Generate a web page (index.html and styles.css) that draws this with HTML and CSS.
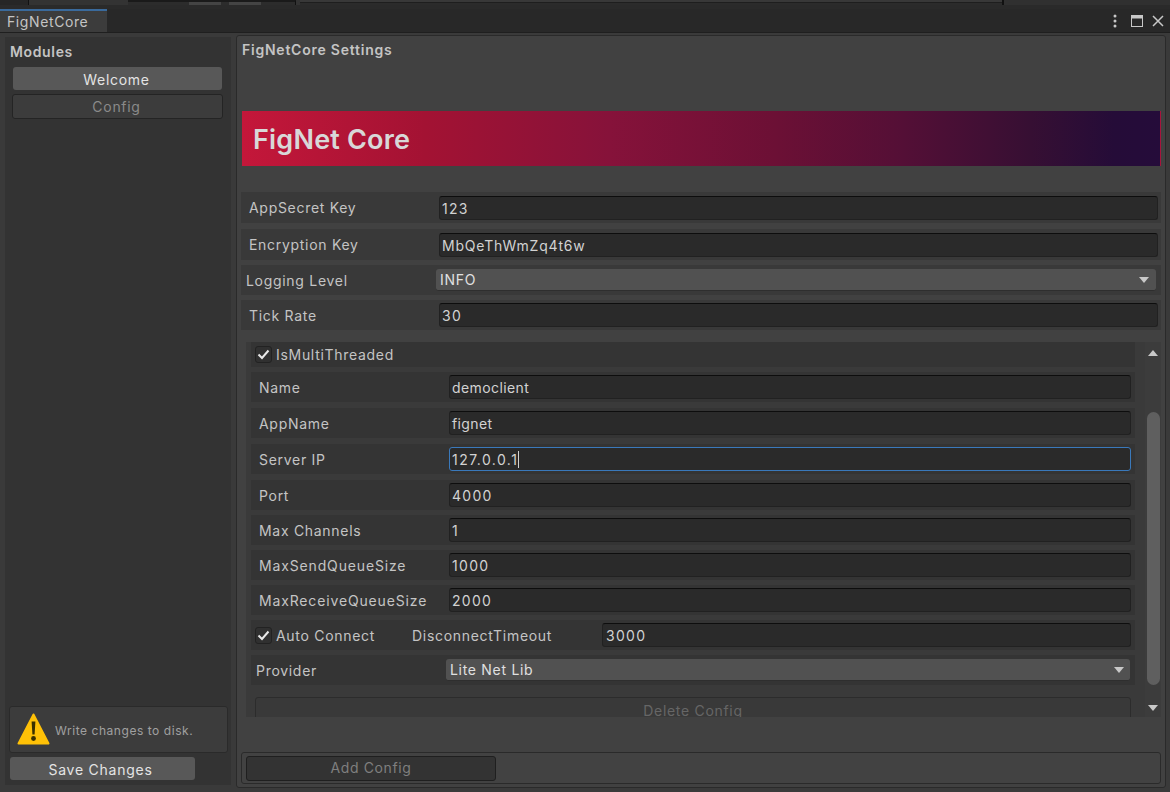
FILE: index.html
```html
<!DOCTYPE html>
<html lang="en">

<head>
    <meta charset="UTF-8">
    <title>FigNetCore</title>
    <link rel="stylesheet" href="styles.css">
</head>

<body>
    <div class="window">
        <!-- editor chrome behind the window -->
        <div class="strip">
            <div class="seg seg-a"></div>
            <div class="seg seg-b"></div>
            <div class="seg seg-c">
                <span class="seg-box"></span>
                <span class="seg-box"></span>
            </div>
            <div class="seg seg-d"></div>
            <div class="seg seg-e"></div>
            <div class="seg seg-f"></div>
        </div>

        <div class="tabbar">
            <div class="tab">FigNetCore</div>
            <div class="tab-icons">
                <svg width="6" height="14" viewBox="0 0 6 14">
                    <circle cx="3" cy="2" r="1.5" fill="#c8c8c8" />
                    <circle cx="3" cy="7" r="1.5" fill="#c8c8c8" />
                    <circle cx="3" cy="12" r="1.5" fill="#c8c8c8" />
                </svg>
                <svg width="12" height="12" viewBox="0 0 12 12">
                    <rect x="0.5" y="0.5" width="11" height="11" fill="none" stroke="#c8c8c8" />
                    <rect x="0" y="0" width="12" height="3.5" fill="#c8c8c8" />
                </svg>
                <svg width="12" height="12" viewBox="0 0 12 12">
                    <path d="M1 1L11 11M11 1L1 11" fill="none" stroke="#c8c8c8" stroke-width="1.5" />
                </svg>
            </div>
        </div>

        <div class="main">
            <div class="side">
                <div class="side-title">Modules</div>
                <div class="side-btn side-btn-on">Welcome</div>
                <div class="side-btn side-btn-off">Config</div>
                <div class="side-space"></div>
                <div class="notice">
                    <svg class="notice-icon" width="33" height="33" viewBox="0 0 33 33">
                        <path d="M16.5 1.5L31.5 30.5H1.5Z" fill="#ffc107" stroke="#ffc107" stroke-width="2" stroke-linejoin="round" />
                        <path d="M14.6 8.5H18.4L17.6 21.5H15.4Z" fill="#3a3000" />
                        <circle cx="16.5" cy="25.5" r="2.4" fill="#3a3000" />
                    </svg>
                    <span class="notice-text">Write changes to disk.</span>
                </div>
                <div class="save-btn">Save Changes</div>
            </div>

            <div class="panel">
                <div class="panel-title">FigNetCore Settings</div>
                <div class="banner">FigNet Core</div>

                <div class="top-rows">
                    <div class="row row-tall">
                        <div class="label">AppSecret Key</div>
                        <div class="field num">123</div>
                    </div>
                    <div class="row row-tall">
                        <div class="label">Encryption Key</div>
                        <div class="field">MbQeThWmZq4t6w</div>
                    </div>
                    <div class="row">
                        <div class="label label-drop">Logging Level</div>
                        <div class="drop">INFO<span class="arrow-down"></span></div>
                    </div>
                    <div class="row">
                        <div class="label">Tick Rate</div>
                        <div class="field num">30</div>
                    </div>
                </div>

                <div class="scroll">
                    <div class="scroll-inner">
                        <div class="row check-row">
                            <span class="check">
                                <svg width="13" height="11" viewBox="0 0 13 11">
                                    <path d="M1.5 5.5L5 9L11.5 1.5" fill="none" stroke="#e8e8e8" stroke-width="2" />
                                </svg>
                            </span>
                            <span class="check-label">IsMultiThreaded</span>
                        </div>
                        <div class="row inner wide-gap">
                            <div class="label">Name</div>
                            <div class="field tight">democlient</div>
                        </div>
                        <div class="row inner wide-gap">
                            <div class="label">AppName</div>
                            <div class="field tight">fignet</div>
                        </div>
                        <div class="row inner wide-gap">
                            <div class="label">Server IP</div>
                            <div class="field num field-focus">127.0.0.1<span class="caret"></span></div>
                        </div>
                        <div class="row inner">
                            <div class="label">Port</div>
                            <div class="field num">4000</div>
                        </div>
                        <div class="row inner">
                            <div class="label">Max Channels</div>
                            <div class="field num">1</div>
                        </div>
                        <div class="row inner">
                            <div class="label label-wide">MaxSendQueueSize</div>
                            <div class="field num">1000</div>
                        </div>
                        <div class="row inner">
                            <div class="label label-wide">MaxReceiveQueueSize</div>
                            <div class="field num">2000</div>
                        </div>
                        <div class="row check-row auto-row">
                            <span class="check">
                                <svg width="13" height="11" viewBox="0 0 13 11">
                                    <path d="M1.5 5.5L5 9L11.5 1.5" fill="none" stroke="#e8e8e8" stroke-width="2" />
                                </svg>
                            </span>
                            <span class="check-label auto-label">Auto Connect</span>
                            <span class="timeout-label">DisconnectTimeout</span>
                            <div class="field num">3000</div>
                        </div>
                        <div class="row inner provider-row">
                            <div class="label">Provider</div>
                            <div class="drop">Lite Net Lib<span class="arrow-down"></span></div>
                        </div>
                        <div class="delete-btn">Delete Config</div>
                    </div>
                    <div class="scrollbar">
                        <span class="arrow-up"></span>
                        <div class="thumb"></div>
                        <span class="arrow-down"></span>
                    </div>
                </div>

                <div class="panel-space"></div>
                <div class="footer">
                    <div class="add-btn">Add Config</div>
                </div>
            </div>
        </div>
    </div>
</body>

</html>
```

FILE: styles.css
```css
* {
    padding: 0;
    margin: 0;
    box-sizing: border-box;
}

html,
body {
    width: 1170px;
    height: 792px;
    overflow: hidden;
    background: #3a3a3a;
}

body {
    font-family: Inter, "Liberation Sans", sans-serif;
    font-size: 14px;
    letter-spacing: 0.7px;
    color: #c4c4c4;
}

.window {
    height: 792px;
    display: flex;
    flex-direction: column;
}

/* top strip */
.strip {
    height: 9px;
    display: flex;
    background: #2a2a2a;
}

.seg {
    height: 5px;
}

.seg-a {
    width: 29px;
    background: #262626;
    border-right: 1px solid #111;
}

.seg-b {
    width: 99px;
    background: #333;
}

.seg-c {
    width: 168px;
    background: #2c2c2c;
    border-top: 2px solid #1a1a1a;
    border-right: 1px solid #111;
    display: flex;
    gap: 8px;
    padding-left: 61px;
}

.seg-box {
    width: 32px;
    height: 3px;
    background: #444;
}

.seg-d {
    width: 4px;
    background: #333;
}

.seg-e {
    width: 704px;
    background: linear-gradient(#383838 2px, #1e1e1e 2px, #1e1e1e 3px, #2b2b2b 3px);
    border-right: 2px solid #111;
}

.seg-f {
    flex: 1;
    background: #303030;
}

/* tabs */
.tabbar {
    height: 24px;
    display: flex;
    justify-content: space-between;
    background: #282828;
    border-bottom: 1px solid #1f1f1f;
}

.tab {
    width: 107px;
    height: 23px;
    padding-left: 7px;
    line-height: 22px;
    background: #3c3c3c;
    border-top: 2px solid #3a6a9c;
    letter-spacing: 0.6px;
}

.tab-icons {
    display: flex;
    align-items: center;
    gap: 9px;
    padding-right: 6px;
}

.tab-icons svg:nth-child(2) {
    margin-left: 4px;
}

/* layout */
.main {
    flex: 1;
    display: flex;
    padding: 2px 4px 4px 5px;
    gap: 5px;
}

.side {
    width: 226px;
    margin-top: 2px;
    margin-bottom: 3px;
    background: #333;
    display: flex;
    flex-direction: column;
    padding-left: 4px;
}

.side-title {
    height: 30px;
    line-height: 30px;
    padding-left: 1px;
    font-weight: 600;
    letter-spacing: 0.65px;
}

.side-btn {
    height: 23px;
    line-height: 25px;
    text-align: center;
    border-radius: 3px;
    margin-left: 4px;
    width: 209px;
    padding-right: 2px;
}

.side-btn-on {
    background: #585858;
    color: #e4e4e4;
}

.side-btn-off {
    height: 25px;
    width: 211px;
    margin-left: 3px;
    margin-top: 4px;
    line-height: 23px;
    background: #3c3c3c;
    border: 1px solid #242424;
    color: #8a8a8a;
}

.side-space {
    flex: 1;
}

.notice {
    width: 219px;
    height: 47px;
    display: flex;
    align-items: center;
    gap: 5px;
    padding-left: 7px;
    background: #3c3c3c;
    border: 1px solid #2a2a2a;
    border-radius: 3px;
    font-size: 12px;
    letter-spacing: 0.55px;
    color: #a0a0a0;
}

.notice-text {
    padding-top: 2px;
}

.save-btn {
    width: 185px;
    height: 23px;
    margin: 4px 0 5px 1px;
    padding-right: 4px;
    line-height: 26px;
    text-align: center;
    background: #585858;
    border-radius: 3px;
    color: #e4e4e4;
    letter-spacing: 0.75px;
}

/* right panel */
.panel {
    width: 930px;
    background: #414141;
    border: 1px solid #2a2a2a;
    border-radius: 3px;
    padding: 0 4px 3px;
    display: flex;
    flex-direction: column;
}

.panel-title {
    height: 28px;
    line-height: 28px;
    padding-left: 1px;
    font-weight: 600;
    letter-spacing: 0.77px;
}

.banner {
    height: 55px;
    margin: 47px 0 26px 1px;
    padding-left: 11px;
    line-height: 58px;
    font-size: 27px;
    font-weight: 600;
    letter-spacing: 0.2px;
    color: #d8d8d8;
    background: linear-gradient(90deg, #c4173a 0%, #a31233 20%, #86123a 40%, #6c1035 58%, #540f36 72%, #360f33 86%, #250c38 95%, #250c3a 100%);
    border-right: 1px solid #a8143c;
}

/* rows */
.row {
    height: 30px;
    display: flex;
    align-items: center;
    background: #393939;
    margin-bottom: 5px;
}

.row-tall {
    height: 31px;
    margin-bottom: 6px;
}

.row-tall + .row {
    margin-bottom: 5px;
}

.label {
    width: 198px;
    padding-left: 8px;
    flex-shrink: 0;
}

.label-drop {
    width: 195px;
    padding-left: 5px;
}

.label-wide {
    letter-spacing: 0.85px;
}

.field {
    flex: 1;
    height: 24px;
    margin-right: 3px;
    padding-left: 2px;
    line-height: 24px;
    background: #2a2a2a;
    border: 1px solid #212121;
    border-top-color: #0d0d0d;
    border-radius: 3px;
    color: #d2d2d2;
    letter-spacing: 0.8px;
}

.num {
    letter-spacing: 1.3px;
}

.tight {
    letter-spacing: 0.4px;
}

.field-focus {
    border-color: #3a79bb;
    background: #2a2a2a;
    line-height: 23px;
    letter-spacing: 1.45px;
}

.caret {
    display: inline-block;
    width: 1px;
    height: 17px;
    margin-left: 0;
    background: #d2d2d2;
    vertical-align: -3px;
}

.drop {
    flex: 1;
    height: 22px;
    margin-right: 5px;
    padding-left: 4px;
    display: flex;
    align-items: center;
    justify-content: space-between;
    background: #515151;
    border-bottom: 1px solid #2e2e2e;
    border-radius: 3px;
    color: #e0e0e0;
}

.arrow-down {
    width: 0;
    height: 0;
    margin-right: 7px;
    border-left: 5px solid transparent;
    border-right: 5px solid transparent;
    border-top: 6px solid #c8c8c8;
}

.arrow-up {
    width: 0;
    height: 0;
    border-left: 5px solid transparent;
    border-right: 5px solid transparent;
    border-bottom: 6px solid #c8c8c8;
}

/* scroll area */
.scroll {
    height: 375px;
    margin-top: 7px;
    margin-left: 5px;
    display: flex;
    background: #3a3a3a;
    overflow: hidden;
}

.scroll-inner {
    width: 889px;
    padding-left: 5px;
}

.scroll .row {
    background: #343434;
}

.check-row {
    height: 25px;
    margin-bottom: 5px;
    padding-left: 4px;
}

.check {
    width: 17px;
    height: 17px;
    display: flex;
    align-items: center;
    justify-content: center;
    background: #303030;
    border: 1px solid #222;
    border-radius: 3px;
}

.check-label {
    margin-left: 4px;
}

.inner .label {
    width: 198px;
}

.wide-gap {
    margin-bottom: 6px;
}

.auto-row {
    height: 30px;
}

.auto-label {
    width: 136px;
}

.timeout-label {
    width: 190px;
}

.auto-row .field,
.inner .field {
    margin-right: 4px;
}

.auto-row .field {
    padding-left: 3px;
}

.provider-row .label {
    width: 195px;
    padding-left: 5px;
}

.provider-row .drop {
    margin-right: 5px;
}

.provider-row .arrow-down {
    margin-right: 6px;
}

.delete-btn {
    width: 876px;
    height: 28px;
    margin-top: 12px;
    margin-left: 4px;
    line-height: 25px;
    text-align: center;
    background: #393939;
    border: 1px solid #2c2c2c;
    border-radius: 3px;
    color: #666;
}

.scrollbar {
    width: 16px;
    margin-left: 10px;
    display: flex;
    flex-direction: column;
    align-items: center;
    background: #3c3c3c;
    padding-top: 8px;
}

.scrollbar .arrow-down {
    margin: 20px 0 0;
}

.thumb {
    width: 13px;
    height: 273px;
    margin-top: 56px;
    background: #5f5f5f;
    border-radius: 7px;
}

/* footer */
.panel-space {
    flex: 1;
}

.footer {
    height: 32px;
    padding: 3px 4px;
    background: #424242;
    border: 1px solid #2a2a2a;
    border-radius: 3px;
}

.add-btn {
    width: 250px;
    height: 25px;
    line-height: 21px;
    text-align: center;
    background: #333;
    border: 1px solid #1f1f1f;
    border-radius: 3px;
    color: #7f7f7f;
    letter-spacing: 0.6px;
}
```
